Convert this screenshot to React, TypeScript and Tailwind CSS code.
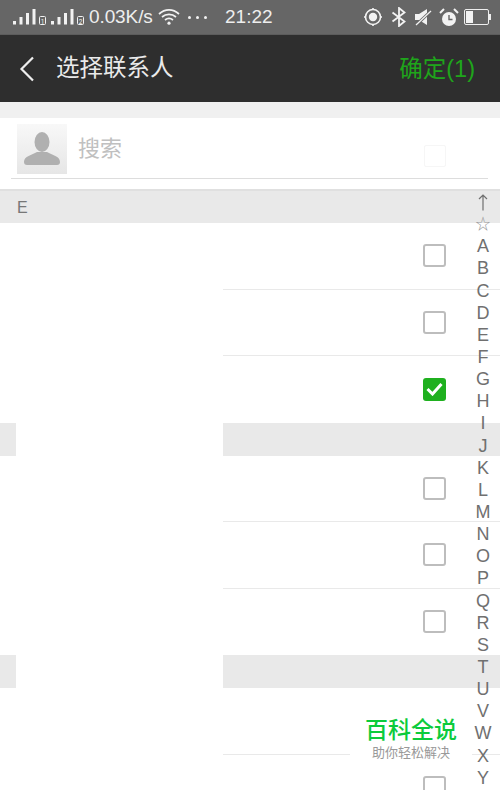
const INDEX = "☆ A B C D E F G H I J K L M N O P Q R S T U V W X Y".split(" ");
const CJK = { fontFamily: '"Liberation Sans", "Noto Sans CJK SC", sans-serif' };

function Signal({ n }: { n: string }) {
  return (
    <svg width="38" height="18" viewBox="0 0 38 18" fill="#f2f2f2">
      <rect x="0" y="13" width="3" height="3.5" />
      <rect x="6.5" y="9" width="3" height="7.5" />
      <rect x="13" y="5" width="3" height="11.5" />
      <rect x="19.5" y="1" width="3" height="15.5" />
      <rect x="26.5" y="8.5" width="6" height="8" rx="1" fill="none" stroke="#f2f2f2" strokeWidth="1" />
      <text x="29.5" y="15.5" fontSize="6.5" textAnchor="middle" fontFamily="Roboto" fill="#f2f2f2">{n}</text>
    </svg>
  );
}

function StatusBar() {
  return (
    <div className="h-[34px] bg-[#666666] border-b border-[#5c5c5c] flex items-center text-[#eeeeee] text-[19px] box-content">
      <div className="ml-[13px] flex items-center">
        <Signal n="1" />
        <Signal n="2" />
      </div>
      <span className="w-[69px] mt-[1px] tracking-[-0.1px] whitespace-nowrap">0.03K/s</span>
      <svg width="22" height="18" viewBox="0 0 22 18" fill="none" stroke="#f2f2f2" strokeWidth="1.7">
        <path d="M1 6 C7 0.5 15 0.5 21 6" />
        <path d="M4 9 C8 5.5 14 5.5 18 9" />
        <path d="M7 12 C9.5 10 12.5 10 15 12" />
        <circle cx="11" cy="15.2" r="1.6" fill="#f2f2f2" stroke="none" />
      </svg>
      <div className="ml-[8px] flex gap-[5px]">
        <span className="w-[3px] h-[3px] bg-[#f2f2f2] rounded-full" />
        <span className="w-[3px] h-[3px] bg-[#f2f2f2] rounded-full" />
        <span className="w-[3px] h-[3px] bg-[#f2f2f2] rounded-full" />
      </div>
      <span className="ml-[18px] w-[50px] mt-[1px]">21:22</span>
      <div className="ml-[88px] flex items-center">
        <svg width="20" height="20" viewBox="0 0 20 20" fill="none" stroke="#f2f2f2">
          <circle cx="10" cy="10" r="7.5" strokeWidth="1.6" />
          <circle cx="10" cy="10" r="4.2" fill="#f2f2f2" stroke="none" />
          <path d="M10 1v2M10 17v2M1 10h2M17 10h2" strokeWidth="1.6" />
        </svg>
        <svg width="16" height="20" viewBox="0 0 16 20" fill="none" stroke="#f2f2f2" strokeWidth="1.8" className="ml-[8px]">
          <path d="M1.5 5.5l12 9-5.5 4.5V1l5.5 4.5-12 9" />
        </svg>
        <svg width="18" height="18" viewBox="0 0 18 18" className="ml-[7px]">
          <path d="M1 6h4l8-5v16l-8-5H1z" fill="#f2f2f2" />
          <path d="M1 18L17 3" stroke="#666666" strokeWidth="3" />
          <path d="M2 17L17 3" stroke="#f2f2f2" strokeWidth="1.3" />
        </svg>
        <svg width="20" height="19" viewBox="0 0 20 19" className="ml-[7px]">
          <circle cx="10" cy="11" r="7" fill="#f2f2f2" />
          <path d="M10 7v4.5h3.5" stroke="#666666" strokeWidth="1.4" fill="none" />
          <path d="M1 5l4-4M19 5l-4-4" stroke="#f2f2f2" strokeWidth="2" />
        </svg>
        <div className="ml-[5px] w-[25px] h-[16px] border border-[#eeeeee] rounded-[2px] flex p-[1px]">
          <div className="w-[7px] bg-[#f2f2f2]" />
        </div>
        <div className="w-[2px] h-[6px] bg-[#eeeeee]" />
      </div>
    </div>
  );
}

function Header() {
  return (
    <div className="h-[67px] bg-[#2e2e2e] flex items-center">
      <svg width="16" height="26" viewBox="0 0 16 26" fill="none" stroke="#eeeeee" strokeWidth="2.2" className="ml-[19px]">
        <path d="M14 1.5L2.5 13 14 24.5" />
      </svg>
      <span className="ml-[21px] mt-[1px] text-[23.5px] text-[#eaeaea]">选择联系人</span>
      <span className="ml-auto mr-[25px] mt-[2px] text-[23.5px] text-[#1fa51b]">确定(1)</span>
    </div>
  );
}

function SearchBar() {
  return (
    <div className="h-[73px] bg-white border-b-2 border-[#e0e0e0] pl-[11px] pr-[12px]">
      <div className="h-[61px] border-b border-[#dddddd] flex items-start">
        <div className="ml-[6px] mt-[6px] w-[50px] h-[50px] bg-gradient-to-b from-[#f8f8f8] to-[#e6e6e6] flex items-center justify-center">
          <svg width="38" height="34" viewBox="0 0 38 34" fill="#b0b0b0">
            <ellipse cx="19" cy="10" rx="7.5" ry="10" />
            <path d="M1 30c0-6 8-7 13-10h10c5 3 13 4 13 10 0 2-1 3-3 3H4c-2 0-3-1-3-3z" />
          </svg>
        </div>
        <span className="ml-[11px] mt-[15px] text-[22px] text-[#c0c0c0] leading-[32px]">搜索</span>
        <div className="ml-auto mr-[42px] mt-[27px] w-[22px] h-[22px] border border-[#f6f6f6] rounded-[2px]" />
      </div>
    </div>
  );
}

function SectionBar({ label, masked }: { label?: string; masked?: boolean }) {
  if (masked) {
    return (
      <div className="h-[33px] flex">
        <div className="w-[16px] bg-[#e9e9e9]" />
        <div className="w-[207px] bg-white" />
        <div className="flex-1 bg-[#e9e9e9]" />
      </div>
    );
  }
  return (
    <div className="h-[32px] bg-[#e9e9e9] flex items-center pl-[17px] pt-[2px] text-[16px] text-[#777777]">{label}</div>
  );
}

function Row({ checked, last }: { checked?: boolean; last?: boolean }) {
  return (
    <div className="h-[66.5px] flex">
      <div className="w-[223px]" />
      <div className={`flex-1 flex items-center pr-[54px] justify-end ${last ? "" : "border-b border-[#e9e9e9]"}`}>
        {checked ? (
          <div className="w-[23px] h-[23px] rounded-[3px] bg-[#1fb01f] flex items-center justify-center">
            <svg width="17" height="14" viewBox="0 0 17 14" fill="none" stroke="white" strokeWidth="3">
              <path d="M1.5 7l5 5 9-10" />
            </svg>
          </div>
        ) : (
          <div className="w-[23px] h-[23px] rounded-[3px] border-2 border-[#bdbdbd] bg-white" />
        )}
      </div>
    </div>
  );
}

export default function App() {
  return (
    <div className="relative w-[500px] h-[790px] overflow-hidden bg-white" style={CJK}>
      <StatusBar />
      <Header />
      <div className="h-[16px] bg-[#f0f0f0]" />
      <SearchBar />
      <SectionBar label="E" />
      <Row />
      <Row />
      <Row checked last />
      <SectionBar masked />
      <Row />
      <Row />
      <Row last />
      <SectionBar masked />
      <Row />
      <Row />

      {/* letter index */}
      <div className="absolute right-[7px] top-[191px] w-[20px] flex flex-col items-center text-[18px] text-[#707070]">
        <div className="h-[22.15px] flex items-center">
          <svg width="10" height="17" viewBox="0 0 10 17" fill="none" stroke="#707070" strokeWidth="1.2">
            <path d="M5 16.5V1M1 5l4-4 4 4" />
          </svg>
        </div>
        {INDEX.map(c => (
          <div key={c} className={`h-[22.15px] leading-[22.15px] ${c === "☆" ? "text-[15px] text-[#999999]" : ""}`}>{c}</div>
        ))}
      </div>

      {/* watermark */}
      <div className="absolute left-[350px] top-[697px] w-[122px] h-[64px] bg-white flex flex-col items-center justify-end">
        <span className="text-[23px] leading-[30px] font-medium text-[#0ccb3c]">百科全说</span>
        <span className="text-[13px] leading-[16px] text-[#999999]">助你轻松解决</span>
      </div>
    </div>
  );
}
